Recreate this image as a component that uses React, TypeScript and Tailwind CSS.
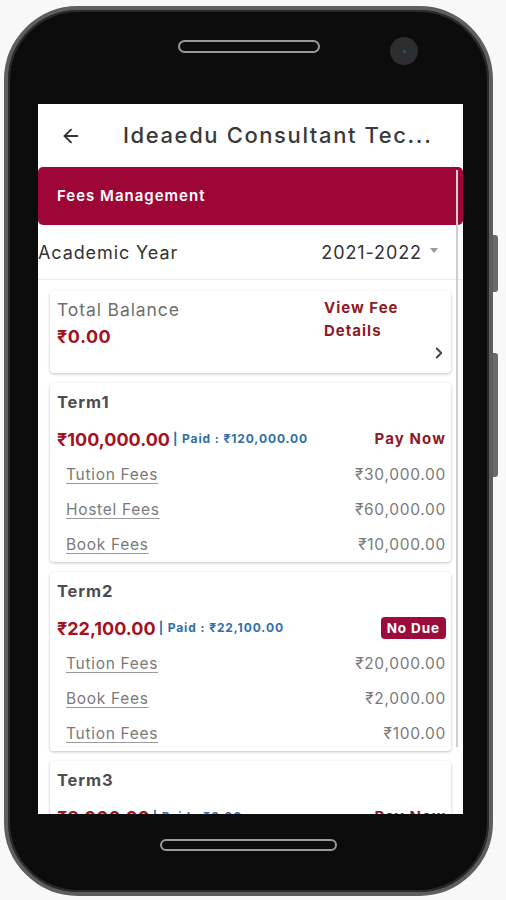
import { ArrowLeft, ChevronRight } from "lucide-react";

const font = { fontFamily: "Inter, 'Noto Sans', sans-serif" };

type Fee = { name: string; amount: string };
type Term = { title: string; due: string; paid: string; status: "pay" | "nodue"; fees: Fee[] };

const terms: Term[] = [
  {
    title: "Term1",
    due: "₹100,000.00",
    paid: "₹120,000.00",
    status: "pay",
    fees: [
      { name: "Tution Fees", amount: "₹30,000.00" },
      { name: "Hostel Fees", amount: "₹60,000.00" },
      { name: "Book Fees", amount: "₹10,000.00" },
    ],
  },
  {
    title: "Term2",
    due: "₹22,100.00",
    paid: "₹22,100.00",
    status: "nodue",
    fees: [
      { name: "Tution Fees", amount: "₹20,000.00" },
      { name: "Book Fees", amount: "₹2,000.00" },
      { name: "Tution Fees", amount: "₹100.00" },
    ],
  },
  {
    title: "Term3",
    due: "₹8,000.00",
    paid: "₹0.00",
    status: "pay",
    fees: [{ name: "Tution Fees", amount: "₹8,000.00" }],
  },
];

function TermCard({ term }: { term: Term }) {
  return (
    <div className="mx-[12px] mt-[10px] h-[179px] shrink-0 rounded-[4px] bg-white pl-[7px] pr-[5px] shadow-[0_1px_3px_rgba(0,0,0,0.25)]">
      <div className="flex h-[38px] items-center text-[16.5px] font-bold tracking-[0.9px] text-[#4d4d4d]">{term.title}</div>
      <div className="mt-[4px] flex h-[28px] items-center justify-between">
        <div className="flex items-center">
          <span className="text-[18px] font-bold text-[#a5121f]">{term.due}</span>
          <span className="ml-[3px] text-[12px] font-bold tracking-[0.9px] text-[#2f6eaa]">| Paid : {term.paid}</span>
        </div>
        {term.status === "pay" ? (
          <span className="text-[15px] font-bold tracking-[1.1px] text-[#8f1a24]">Pay Now</span>
        ) : (
          <span className="rounded-[4px] bg-[#9b0c3a] px-[6px] py-[1px] text-[13.5px] font-bold tracking-[0.9px] text-white">No Due</span>
        )}
      </div>
      <div className="mt-[4px] flex flex-col">
        {term.fees.map((f, i) => (
          <div key={i} className="flex h-[35px] items-center justify-between pl-[9px] text-[15.5px] tracking-[0.7px] text-[#7a7a7a]">
            <span className="underline decoration-[#9a9a9a] underline-offset-[3px]">{f.name}</span>
            <span>{f.amount}</span>
          </div>
        ))}
      </div>
    </div>
  );
}

export default function App() {
  return (
    <div className="relative h-[900px] w-[506px] overflow-hidden bg-[#f8f8f8]" style={font}>
      {/* side buttons */}
      <div className="absolute left-[491px] top-[235px] h-[57px] w-[7px] rounded-r-[3px] bg-[#6a6a6a]" />
      <div className="absolute left-[491px] top-[353px] h-[124px] w-[7px] rounded-r-[3px] bg-[#6a6a6a]" />

      <div className="relative ml-[4px] mt-[6px] h-[890px] w-[489px] rounded-[74px] border-[4px] border-[#5e5e5e] bg-[#0c0c0c] shadow-[inset_0_0_0_2px_#2a2a2a]">
        {/* top bezel */}
        <div className="relative h-[94px]">
          <div className="absolute left-[170px] top-[30px] h-[13px] w-[142px] rounded-full border-[2px] border-[#9a9a9a]" />
          <div className="absolute left-[382px] top-[27px] flex h-[28px] w-[28px] items-center justify-center rounded-full bg-[#2e2e2e]">
            <div className="h-[3px] w-[3px] rounded-full bg-[#1c5a7a]" />
          </div>
        </div>

        {/* screen */}
        <div className="relative ml-[30px] flex h-[710px] w-[425px] flex-col overflow-hidden bg-white">
          <div className="flex h-[63px] shrink-0 items-center">
            <ArrowLeft className="ml-[22px] h-[22px] w-[22px] text-[#333]" strokeWidth={2} />
            <span className="ml-[41px] text-[22px] font-medium tracking-[1.6px] text-[#3a3a3a]">
              Ideaedu Consultant Tec...
            </span>
          </div>

          <div className="flex h-[58px] shrink-0 items-center rounded-[5px] bg-[#9e0637] pl-[19px] text-[15px] font-semibold tracking-[1px] text-white">
            Fees Management
          </div>

          <div className="flex h-[55px] shrink-0 items-center justify-between border-b border-[#ebebeb] pr-[25px] text-[18px] tracking-[0.9px] text-[#333]">
            <span>Academic Year</span>
            <div className="flex items-center">
              <span>2021-2022</span>
              <span className="ml-[8px] mb-[4px] h-0 w-0 border-x-[4px] border-t-[5px] border-x-transparent border-t-[#9a9a9a]" />
            </div>
          </div>

          <div className="mx-[12px] mt-[11px] flex h-[82px] shrink-0 rounded-[4px] bg-white pl-[7px] pr-[3px] shadow-[0_1px_3px_rgba(0,0,0,0.25)]">
            <div className="flex flex-1 flex-col pt-[6px]">
              <span className="text-[17.5px] tracking-[0.9px] text-[#6e6e6e]">Total Balance</span>
              <span className="text-[18px] font-bold tracking-[0.5px] text-[#a5121f]">₹0.00</span>
            </div>
            <div className="flex w-[124px] flex-col pt-[5px]">
              <span className="text-[15px] font-bold leading-[23px] tracking-[1px] text-[#8f1a24]">
                View Fee
                <br />
                Details
              </span>
              <ChevronRight className="ml-auto mt-[2px] h-[18px] w-[18px] text-[#444]" strokeWidth={2.5} />
            </div>
          </div>

          {terms.map((t) => (
            <TermCard key={t.title} term={t} />
          ))}

          <div className="absolute right-[5px] top-[66px] h-[577px] w-[2px] bg-[#cfcfcf]" />
        </div>

        {/* bottom speaker */}
        <div className="mx-auto mt-[25px] h-[12px] w-[177px] rounded-full border-[2px] border-[#9a9a9a]" />
      </div>
    </div>
  );
}
